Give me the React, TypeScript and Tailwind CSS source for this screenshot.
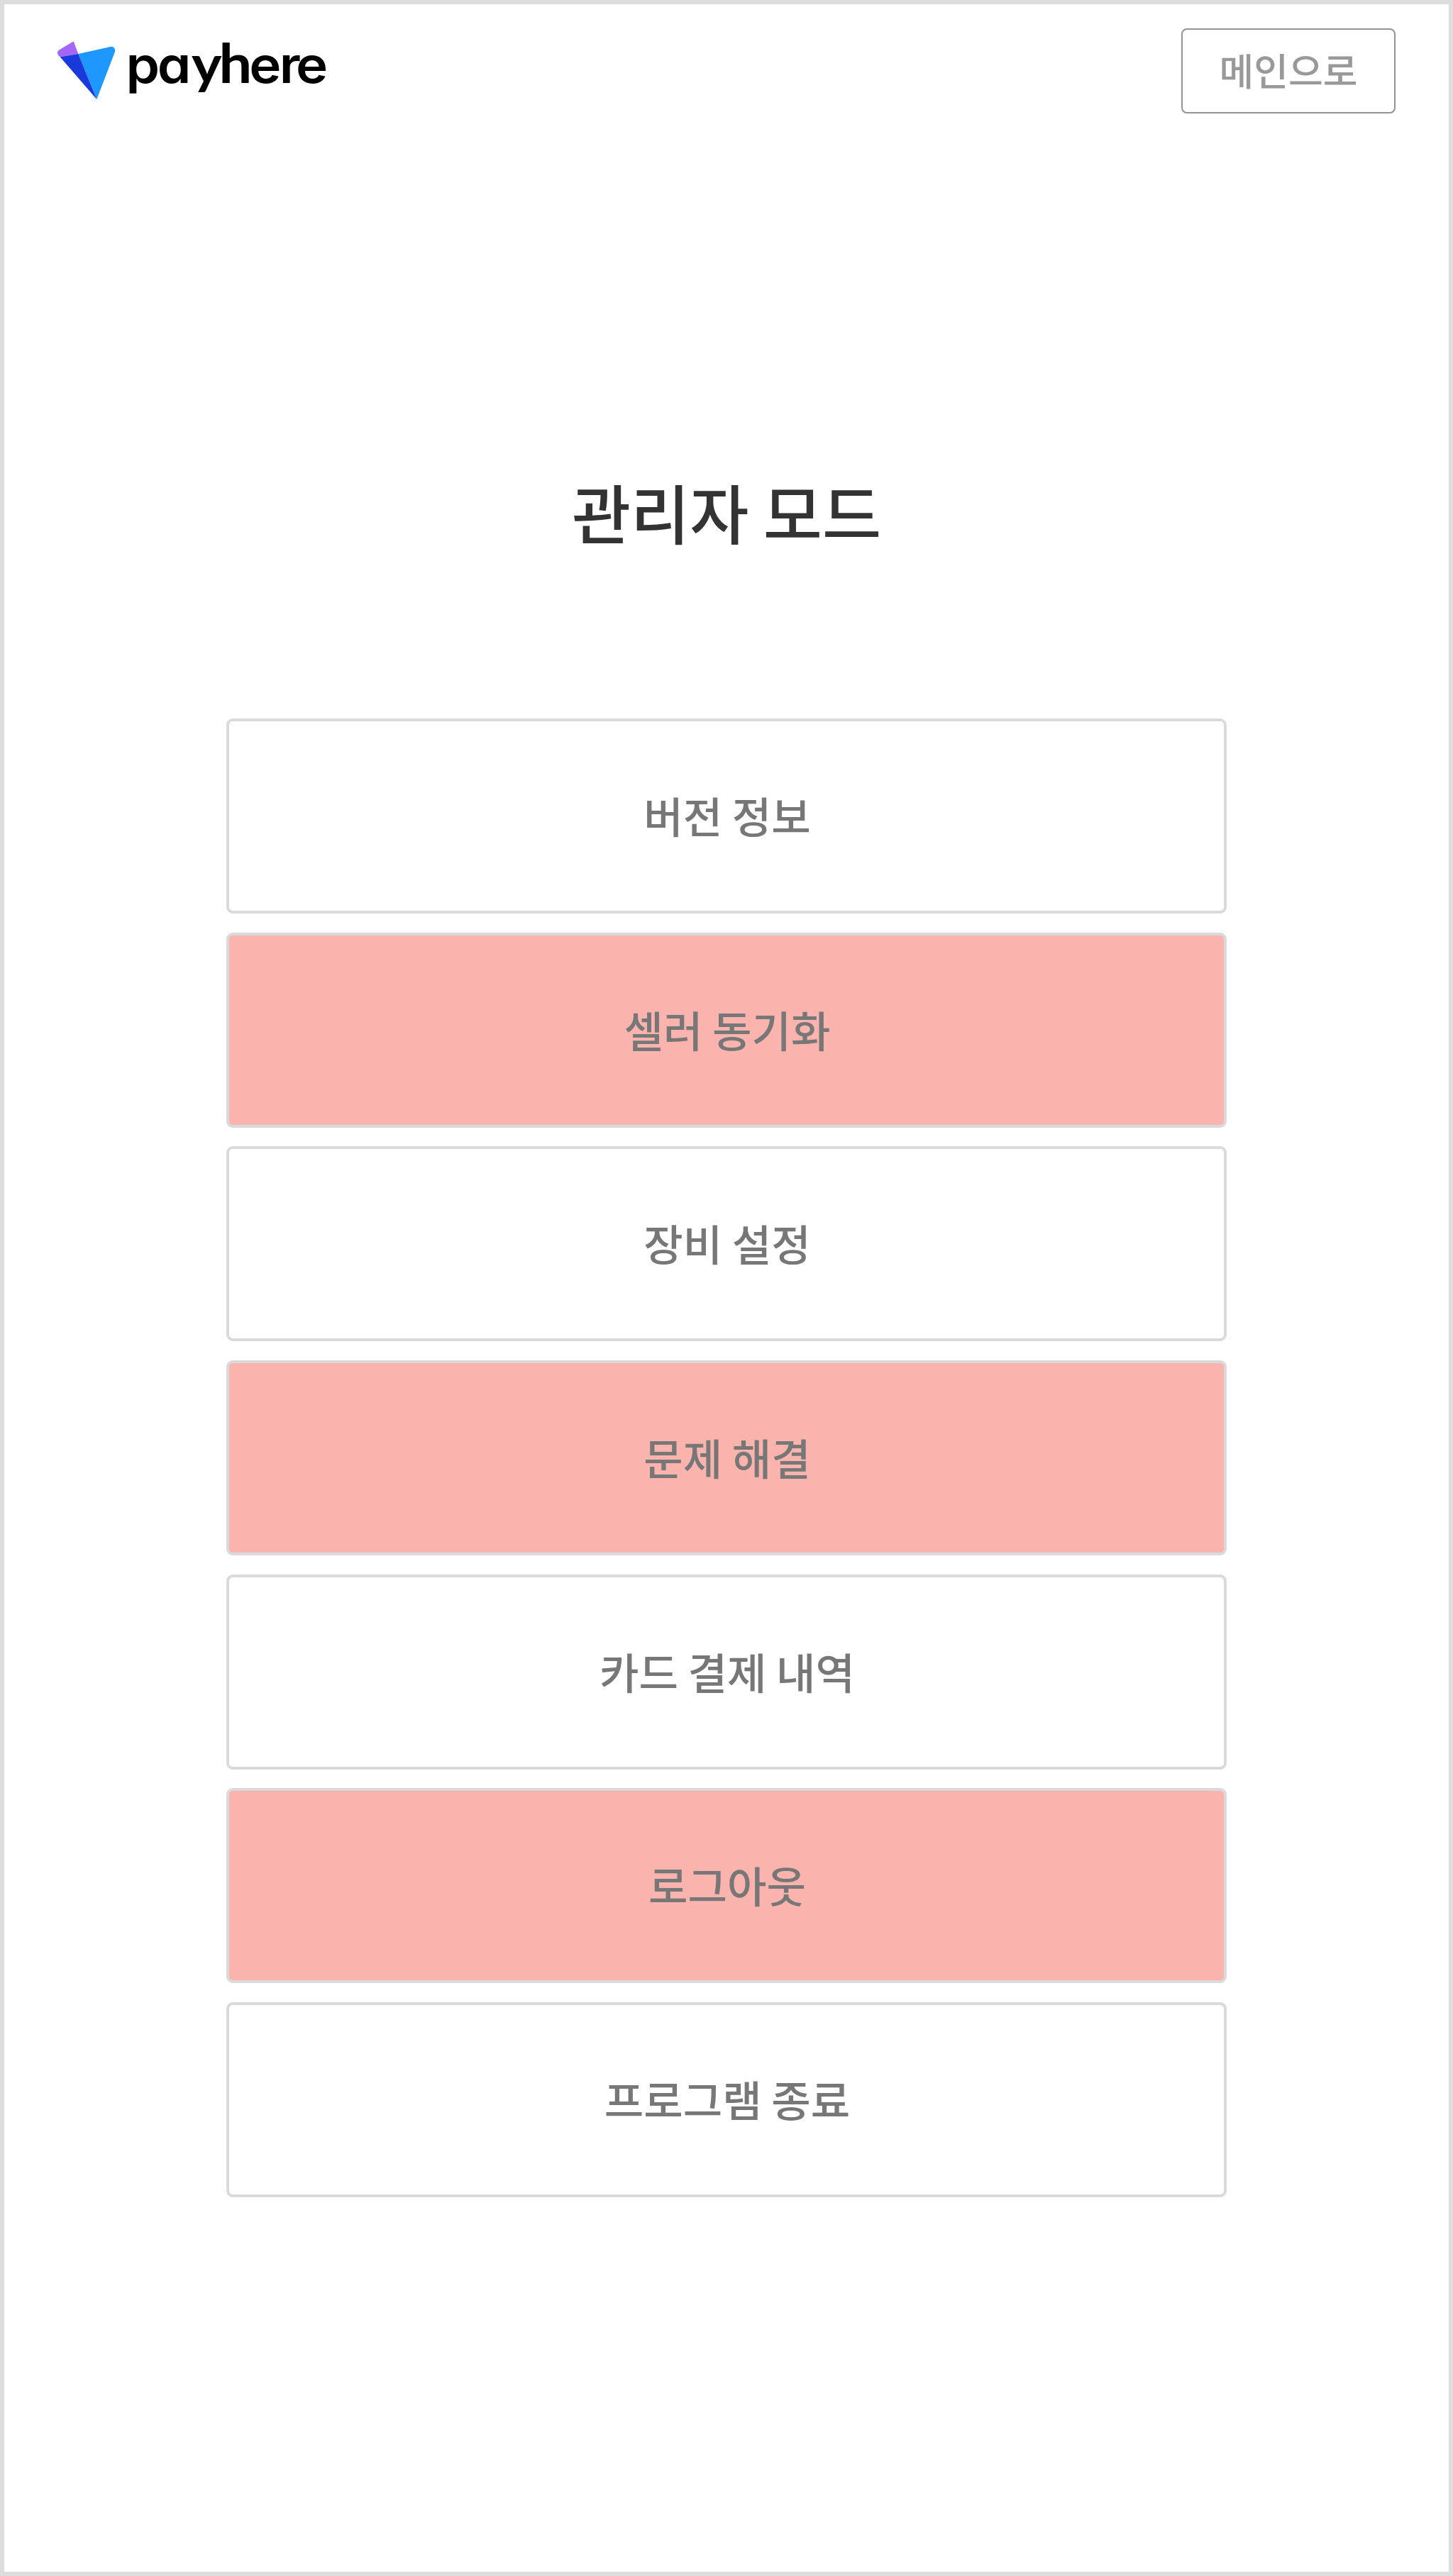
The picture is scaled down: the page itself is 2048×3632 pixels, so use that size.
import clsx from 'clsx'

interface MenuItem {
  label: string
  highlighted: boolean
}

const MENU_ITEMS: MenuItem[] = [
  { label: '버전 정보', highlighted: false },
  { label: '셀러 동기화', highlighted: true },
  { label: '장비 설정', highlighted: false },
  { label: '문제 해결', highlighted: true },
  { label: '카드 결제 내역', highlighted: false },
  { label: '로그아웃', highlighted: true },
  { label: '프로그램 종료', highlighted: false },
]

function Logo() {
  return (
    <svg viewBox="240 111 1170 330" className="h-[110px] w-[390px]" aria-label="payhere">
      <path d="M311 175L331 228L256 241Q243 235 243 222Q244 215 252 210Z" fill="#a366f7" />
      <path d="M331 228L466 198Q478 196 484 204Q489 212 485 222L409 420Z" fill="#1e98ff" />
      <path d="M254 241L331 228L409 420Z" fill="#1939db" />
      <text
        x="493 616 750 857 976 1094 1158"
        y="350"
        transform="scale(1.08 1)"
        fill="#000"
        className="font-['Inter',sans-serif] text-[212px] font-[560] [font-feature-settings:'cv11'] [font-kerning:none]"
      >
        pa<tspan className="font-['Lato',sans-serif] text-[224px] font-bold">y</tspan>
        <tspan className="font-['Lato',sans-serif] text-[230px] font-bold">h</tspan>ere
      </text>
    </svg>
  )
}

function MenuButton({ label, highlighted }: MenuItem) {
  return (
    <button
      className={clsx(
        'flex h-[275px] w-full items-center justify-center rounded-[9px] border-4 border-[#dadada] pb-[3px] pl-[2px] text-[60.3px] font-medium leading-none text-[#777]',
        highlighted ? 'bg-[#fbb4ad]' : 'bg-white'
      )}
    >
      {label}
    </button>
  )
}

export default function App() {
  return (
    <div className="flex h-[3632px] w-[2048px] flex-col border-[6px] border-[#ddd] bg-white font-['Noto_Sans_CJK_KR',sans-serif]">
      {/* Header */}
      <header className="flex items-start justify-between pl-[74px] pr-[75px] pt-[31px]">
        <Logo />
        <button className="mt-[3px] flex h-[120px] w-[302px] items-center justify-center rounded-[8px] border-2 border-[#939393] pb-[3px] text-[53px] font-medium leading-none text-[#999]">
          메인으로
        </button>
      </header>

      {/* Menu */}
      <main className="flex flex-col items-center pt-[494px]">
        <h1 className="h-[134px] text-[90.4px] font-medium leading-[134px] text-[#333]">관리자 모드</h1>
        <nav className="mt-[225px] flex w-[1410px] flex-col gap-[26.7px]">
          {MENU_ITEMS.map((item) => (
            <MenuButton key={item.label} {...item} />
          ))}
        </nav>
      </main>
    </div>
  )
}
